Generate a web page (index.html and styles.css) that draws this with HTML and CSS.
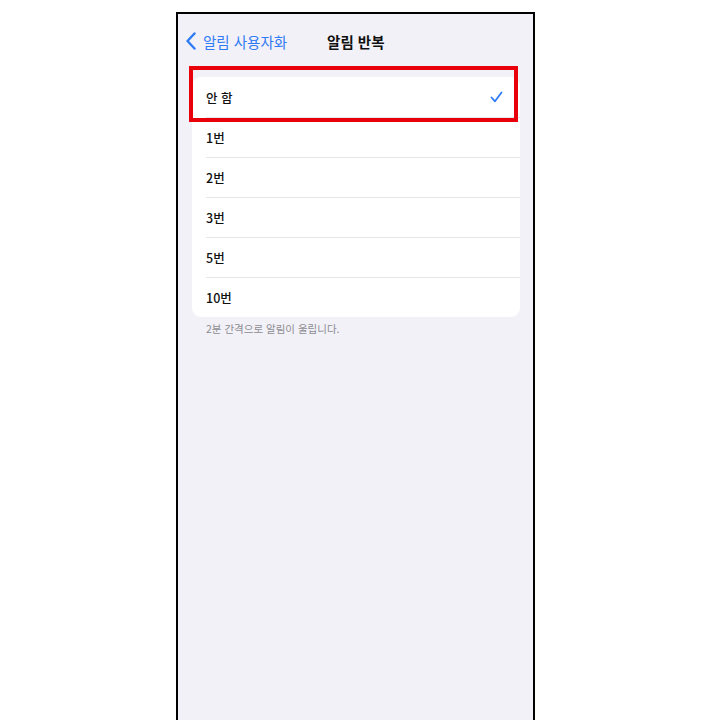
FILE: index.html
```html
<!DOCTYPE html>
<html lang="ko">
<head>
<meta charset="utf-8">
<link rel="stylesheet" href="styles.css">
</head>
<body>
<div class="phone">
  <div class="nav">
    <div class="back">
      <svg class="chev" width="12" height="18" viewBox="0 0 12 18"><path d="M9.5 1.5 L2.5 9 L9.5 16.5" fill="none" stroke="#2f7bf5" stroke-width="2.4" stroke-linecap="round" stroke-linejoin="round"/></svg>
      <span>알림 사용자화</span>
    </div>
    <div class="title">알림 반복</div>
  </div>
  <div class="card">
    <div class="row"><span>안 함</span>
      <svg class="check" width="13" height="12" viewBox="0 0 13 12"><path d="M1.5 6.5 L5 10.3 L11.5 1.5" fill="none" stroke="#2f7bf5" stroke-width="1.8" stroke-linecap="round" stroke-linejoin="round"/></svg>
    </div>
    <div class="row"><span>1번</span></div>
    <div class="row"><span>2번</span></div>
    <div class="row"><span>3번</span></div>
    <div class="row"><span>5번</span></div>
    <div class="row"><span>10번</span></div>
  </div>
  <div class="footnote">2분 간격으로 알림이 울립니다.</div>
  <div class="highlight"></div>
</div>
</body>
</html>
```
FILE: styles.css
```css
html, body {
  margin: 0;
  padding: 0;
  background: #ffffff;
}
body {
  font-family: "Noto Sans CJK KR", "Inter", sans-serif;
  height: 720px;
  overflow: hidden;
}
.phone {
  position: relative;
  box-sizing: border-box;
  margin: 12px 0 0 176px;
  width: 359px;
  height: 720px;
  border: 2px solid #000;
  border-bottom: none;
  background: #f2f1f7;
}
.nav {
  position: relative;
  height: 54px;
  display: flex;
  align-items: center;
}
.back {
  display: flex;
  align-items: center;
  gap: 6px;
  margin-left: 7px;
  color: #2f7bf5;
  font-size: 14.5px;
}
.chev { display: block; }
.title {
  margin-left: 40px;
  font-size: 14.5px;
  font-weight: 700;
  color: #111;
}
.card {
  margin: 9px 13px 0 14px;
  background: #fff;
  border-radius: 9px;
  overflow: hidden;
}
.row {
  height: 40px;
  margin-left: 14px;
  padding-right: 17px;
  display: flex;
  align-items: center;
  justify-content: space-between;
  font-size: 12.5px;
  font-weight: 500;
  color: #111;
  border-top: 1px solid #e6e6ea;
  box-sizing: border-box;
}
.row:first-child { border-top: none; }
.check { display: block; }
.footnote {
  margin: 4px 0 0 28px;
  font-size: 10.5px;
  color: #8d8d92;
}
.highlight {
  position: absolute;
  left: 11px;
  top: 52px;
  width: 329px;
  height: 56px;
  box-sizing: border-box;
  border: 4px solid #e8000a;
}
```
